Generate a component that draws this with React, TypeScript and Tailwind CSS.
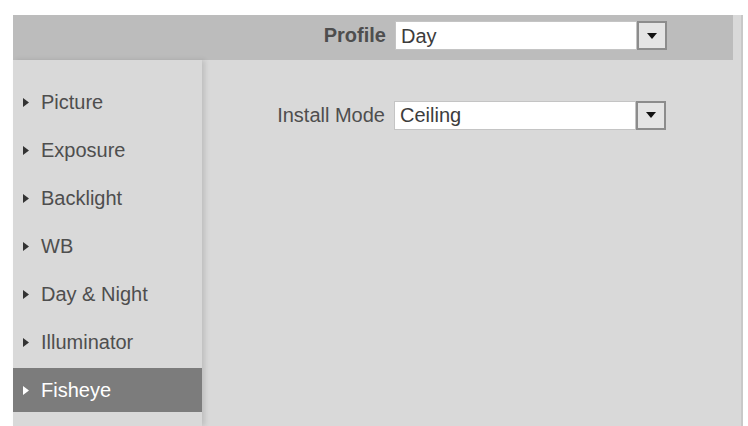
import React from "react";

const menu = [
  "Picture",
  "Exposure",
  "Backlight",
  "WB",
  "Day & Night",
  "Illuminator",
  "Fisheye",
];

function Caret({ light }: { light?: boolean }) {
  return (
    <svg width="6" height="9" viewBox="0 0 6 9" className="shrink-0">
      <path d="M0 0 L6 4.5 L0 9 Z" fill={light ? "#ffffff" : "#333333"} />
    </svg>
  );
}

function Select({ value }: { value: string }) {
  return (
    <div className="flex h-[29px] w-[272px] items-stretch">
      <div className="flex flex-1 items-center border border-[#c4c4c4] bg-white pl-[5px] text-[20px] leading-none text-[#3c3c3c]">
        {value}
      </div>
      <div className="flex w-[30px] items-center justify-center border-2 border-[#8c8c8c] bg-[#e4e4e4]">
        <svg width="10" height="6" viewBox="0 0 10 6">
          <path d="M0 0 L10 0 L5 6 Z" fill="#111111" />
        </svg>
      </div>
    </div>
  );
}

export default function App() {
  const active = "Fisheye";
  return (
    <div
      className="h-[426px] w-[748px] overflow-hidden bg-white pl-[13px] pr-[5px] pt-[15px]"
      style={{ fontFamily: '"Liberation Sans", Arial, sans-serif' }}
    >
      <div className="flex h-full flex-col border-r-2 border-[#c8c8c8] bg-[#d9d9d9]">
        {/* profile bar */}
        <div className="mr-[8px] flex h-[45px] items-start bg-[#bcbcbc] pl-[301px] pt-[6px]">
          <span className="w-[72px] text-right text-[20px] font-bold leading-[29px] text-[#4e4e4e]">
            Profile
          </span>
          <div className="ml-[9px]">
            <Select value="Day" />
          </div>
        </div>

        <div className="flex flex-1">
          {/* side menu */}
          <div className="flex w-[189px] flex-col gap-[4px] pt-[20px] shadow-[3px_0_5px_rgba(0,0,0,0.12)]">
            {menu.map((item) => {
              const on = item === active;
              return (
                <div
                  key={item}
                  className={`flex h-[44px] items-center gap-[7px] pl-[10px] text-[20px] ${
                    on ? "bg-[#7c7c7c] text-white" : "text-[#4e4e4e]"
                  }`}
                >
                  <Caret light={on} />
                  <span className="ml-[5px]">{item}</span>
                </div>
              );
            })}
          </div>

          {/* settings */}
          <div className="flex-1 pt-[40px]">
            <div className="flex items-center pl-[73px]">
              <span className="w-[110px] text-right text-[20px] text-[#4e4e4e]">
                Install Mode
              </span>
              <div className="ml-[9px]">
                <Select value="Ceiling" />
              </div>
            </div>
          </div>
        </div>
      </div>
    </div>
  );
}
